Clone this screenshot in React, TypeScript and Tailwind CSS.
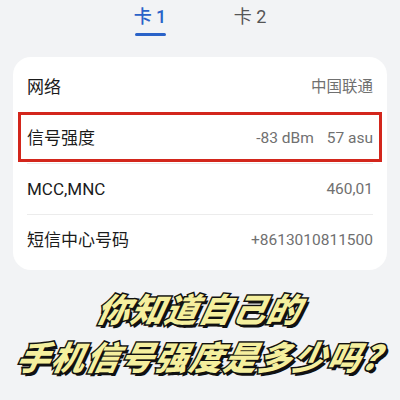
import React from "react";

const rows = [
  { label: "网络", value: ["中国联通"] },
  { label: "信号强度", value: ["-83 dBm", "57 asu"] },
  { label: "MCC,MNC", value: ["460,01"] },
  { label: "短信中心号码", value: ["+8613010811500"] },
];

export default function App() {
  return (
    <div className="w-[400px] h-[400px] bg-[#f2f3f5] overflow-hidden font-['Roboto','Noto_Sans_CJK_SC',sans-serif]">
      <div className="flex justify-center pt-[6px]">
        <div className="w-[100px] flex flex-col items-center">
          <div className="text-[18px] leading-[22px] text-[#2a62c8] font-medium">卡 1</div>
          <div className="mt-[5px] w-[31px] h-[3px] rounded-full bg-[#2a62c8]" />
        </div>
        <div className="w-[100px] flex flex-col items-center">
          <div className="text-[18px] leading-[22px] text-[#555]">卡 2</div>
        </div>
      </div>
      <div className="relative mx-[13px] mt-[21px] bg-white rounded-[18px] pt-[5px] pb-[4px]">
        {rows.map((r, i) => (
          <div key={i} className="mx-[14px] h-[51px] flex items-center justify-between relative">
            <span className="text-[17px] text-[#1b1b1b]">{r.label}</span>
            <span className="flex gap-[13px] text-[15.5px] text-[#707070]">
              {r.value.map((v, j) => (
                <span key={j}>{v}</span>
              ))}
            </span>
            {i < rows.length - 1 && <div className="absolute left-0 right-0 bottom-0 h-px bg-[#ececec]" />}
          </div>
        ))}
        <div className="absolute left-[5px] top-[55px] w-[364px] h-[50px] border-[3px] border-[#d3261c]" />
      </div>
      <div className="mt-[16px] flex flex-col items-center font-['Noto_Sans_CJK_SC',sans-serif] font-black text-[#f5ef9e] italic [-webkit-text-stroke:3px_#111] [paint-order:stroke_fill] [text-shadow:3px_3px_0_#111]">
        <div className="text-[33px] leading-[44px] tracking-[1px] -skew-x-12">你知道自己的</div>
        <div className="text-[33px] leading-[52px] tracking-[1.5px] -skew-x-12">手机信号强度是多少吗?</div>
      </div>
    </div>
  );
}
